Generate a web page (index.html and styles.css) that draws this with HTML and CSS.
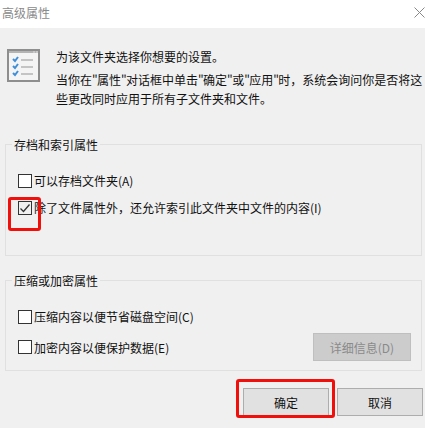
FILE: index.html
```html
<!DOCTYPE html>
<html lang="zh-CN">
<head>
<meta charset="utf-8">
<title>高级属性</title>
<link rel="stylesheet" href="styles.css">
</head>
<body>
<div class="dialog">
  <header class="titlebar">
    <span class="title">高级属性</span>
    <svg class="close" width="11" height="11" viewBox="0 0 11 11"><path d="M.5.5l10 10M10.5.5l-10 10" stroke="#888" stroke-width="1" fill="none"/></svg>
  </header>
  <main class="body">
    <section class="intro">
      <svg class="intro-icon" width="33" height="33" viewBox="0 0 33 33">
        <rect x="1" y="1" width="31" height="31" fill="#f4f4f4" stroke="#8e8e8e" stroke-width="2"/>
        <rect x="2" y="2" width="29" height="2" fill="#b4b4b4"/>
        <path d="M26 3h2M29 3h2" stroke="#ddd" stroke-width="1"/>
        <path d="M6 10l2 2 3-4M6 17l2 2 3-4M6 24l2 2 3-4" stroke="#3f8fd8" stroke-width="2" fill="none"/>
        <path d="M14 11h12M14 18h12M14 25h12" stroke="#c4c4c4" stroke-width="2" fill="none"/>
      </svg>
      <div class="intro-text">
        <p class="lead">为该文件夹选择你想要的设置。</p>
        <p class="desc">当你在<span class="q">"</span>属性<span class="q">"</span>对话框中单击<span class="q">"</span>确定<span class="q">"</span>或<span class="q">"</span>应用<span class="q">"</span>时，系统会询问你是否将这<br>些更改同时应用于所有子文件夹和文件。</p>
      </div>
    </section>

    <fieldset class="group group-index">
      <legend>存档和索引属性</legend>
      <label class="check"><span class="box"></span>可以存档文件夹(A)</label>
      <label class="check check-second"><span class="box">
        <svg width="12" height="12" viewBox="0 0 12 12"><path d="M1.5 6.5l3 3 6-7" stroke="#333" stroke-width="1.3" fill="none"/></svg>
      </span>除了文件属性外，还允许索引此文件夹中文件的内容(I)</label>
    </fieldset>

    <fieldset class="group group-compress">
      <legend>压缩或加密属性</legend>
      <label class="check"><span class="box"></span>压缩内容以便节省磁盘空间(C)</label>
      <div class="row">
        <label class="check"><span class="box"></span>加密内容以便保护数据(E)</label>
        <button class="btn btn-details" disabled>详细信息(D)</button>
      </div>
    </fieldset>

    <footer class="actions">
      <button class="btn btn-action">确定</button>
      <button class="btn btn-action">取消</button>
    </footer>
  </main>
  <div class="mark mark-check"></div>
  <div class="mark mark-ok"></div>
</div>
</body>
</html>
```
FILE: styles.css
```css
* { box-sizing: border-box; }
html, body { margin: 0; padding: 0; }
body {
  width: 425px;
  height: 428px;
  overflow: hidden;
  background: #f0f0f0;
  color: #111;
  font: 12px/19px "Noto Sans CJK SC", "Liberation Sans", sans-serif;
}
.dialog { position: relative; height: 428px; display: flex; flex-direction: column; }
.titlebar {
  height: 28px;
  flex: none;
  background: #fff;
  display: flex;
  align-items: center;
  justify-content: space-between;
  padding: 0 0 4px 2px;
}
.title { color: #8a8a8a; }
.body { flex: 1; padding: 0 3px 0 5px; display: flex; flex-direction: column; }
.intro { display: flex; padding: 19px 0 0 2px; height: 107px; flex: none; }
.intro-icon { flex: none; margin: 2px 16px 0 0; }
.intro-text { flex: 1; margin-right: -3px; white-space: nowrap; }
.intro-text p { margin: 0; }
.lead { margin-bottom: 4px !important; }
.q { letter-spacing: -0.7px; }
.group {
  margin: 0;
  padding: 0 0 0 12px;
  border: 1px solid #e0e0e0;
  min-width: 0;
  flex: none;
}
.group legend { padding: 0 2px; margin-left: -6px; line-height: 19px; }
.group-index { height: 121px; padding-top: 17px; }
.group-compress { height: 100px; margin-top: 15px; padding-top: 17px; }
.check { display: flex; align-items: center; height: 19px; }
.check-second { margin-top: 8px; }
.box {
  width: 14px;
  height: 14px;
  margin-right: 2px;
  flex: none;
  background: #fff;
  border: 1px solid #333;
  display: flex;
  align-items: center;
  justify-content: center;
}
.check-second .box { background: #f0f0f0; }
.row { display: flex; justify-content: space-between; align-items: center; margin-top: 7px; padding-right: 10px; }
.btn {
  font: inherit;
  border: 1px solid #adadad;
  background: #e1e1e1;
  color: #111;
  padding: 0;
  height: 28px;
}
.btn-details { width: 98px; background: #cccccc; border-color: #bfbfbf; color: #8a8a8a; }
.actions { display: flex; justify-content: flex-end; gap: 8px; margin: 17px -1px 0 0; }
.btn-action { width: 86px; }
.mark { position: absolute; border: 3px solid #f00f0a; border-radius: 3px; }
.mark-check { left: 8px; top: 197px; width: 33px; height: 34px; }
.mark-ok { left: 236px; top: 379px; width: 99px; height: 39px; }
```
